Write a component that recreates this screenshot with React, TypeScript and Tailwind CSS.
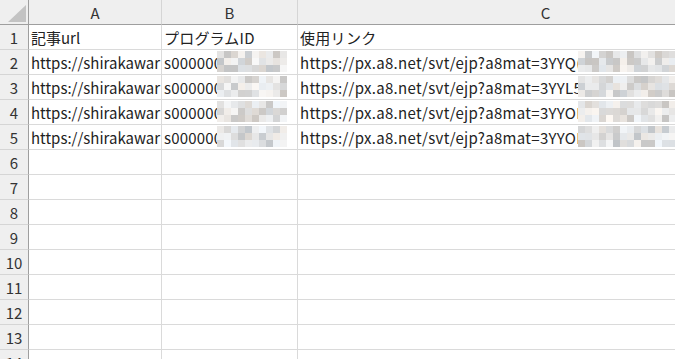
import React from "react";

const rows = 14;

function hash(n: number) {
  const x = Math.sin(n * 12.9898 + 78.233) * 43758.5453;
  return x - Math.floor(x);
}

function Mosaic({ cols, seed, rowsN = 3 }: { cols: number; seed: number; rowsN?: number }) {
  const cells = [];
  for (let r = 0; r < rowsN; r++) {
    for (let c = 0; c < cols; c++) {
      const h = hash(seed * 100 + r * 17 + c);
      const v = Math.round(196 + h * 52);
      const tint = Math.round((hash(seed * 31 + r * 7 + c * 3) - 0.5) * 10);
      cells.push(
        <div
          key={r + "-" + c}
          style={{ backgroundColor: `rgb(${v + tint},${v},${v - tint})` }}
          className="w-[7px] h-[7px]"
        />
      );
    }
  }
  return (
    <div className="grid" style={{ gridTemplateColumns: `repeat(${cols}, 7px)` }}>
      {cells}
    </div>
  );
}

const data: { a: string; b: string; c: string; seed: number }[] = [
  { a: "https://shirakawar", b: "s000000", c: "https://px.a8.net/svt/ejp?a8mat=3YYQ(", seed: 1 },
  { a: "https://shirakawar", b: "s000000", c: "https://px.a8.net/svt/ejp?a8mat=3YYL5", seed: 2 },
  { a: "https://shirakawar", b: "s000000", c: "https://px.a8.net/svt/ejp?a8mat=3YYOI", seed: 3 },
  { a: "https://shirakawar", b: "s000000", c: "https://px.a8.net/svt/ejp?a8mat=3YYOI", seed: 4 },
];

export default function App() {
  const font = { fontFamily: '"Noto Sans CJK JP", "Noto Sans", sans-serif' };
  return (
    <div className="w-[675px] h-[359px] overflow-hidden bg-white text-[15px] text-[#222]" style={font}>
      <div className="grid grid-cols-[29px_133px_136px_496px] grid-rows-[25px_repeat(14,25px)]">
        {/* header row */}
        <div className="relative bg-[#efefef] border-r border-b border-[#9e9e9e]">
          <div className="absolute right-[2px] bottom-[2px] w-0 h-0 border-l-[18px] border-l-transparent border-b-[17px] border-b-[#c3c3c3]" />
        </div>
        {["A", "B", "C"].map((l) => (
          <div
            key={l}
            className="bg-[#efefef] border-r border-r-[#d5d5d5] border-b border-b-[#9e9e9e] flex items-center justify-center text-[#333] leading-none"
          >
            {l}
          </div>
        ))}
        {Array.from({ length: rows }).map((_, i) => {
          const d = i >= 1 && i <= 4 ? data[i - 1] : null;
          return (
            <React.Fragment key={i}>
              <div className="bg-[#efefef] border-r border-r-[#9e9e9e] border-b border-b-[#d5d5d5] flex items-center justify-center text-[#333] leading-none pt-[1px]">
                {i + 1}
              </div>
              <div className="border-r border-b border-[#dadada] flex items-center pl-[2px] overflow-hidden whitespace-nowrap leading-none pt-[1px]">
                {i === 0 ? "記事url" : d ? d.a : ""}
              </div>
              <div className="relative border-r border-b border-[#dadada] flex items-center pl-[2px] overflow-hidden whitespace-nowrap leading-none pt-[1px] tracking-[0.2px]">
                {i === 0 ? "プログラムID" : d ? (
                  <>
                    <span>{d.b}</span>
                    <div className="absolute left-[55px] top-[1px]">
                      <Mosaic cols={10} seed={d.seed} />
                    </div>
                  </>
                ) : ""}
              </div>
              <div className="relative border-b border-[#dadada] flex items-center pl-[2px] overflow-hidden whitespace-nowrap leading-none pt-[1px] tracking-[0.3px]">
                {i === 0 ? "使用リンク" : d ? (
                  <>
                    <span>{d.c}</span>
                    <div className="absolute left-[280px] top-[1px]">
                      <Mosaic cols={16} seed={d.seed + 10} />
                    </div>
                  </>
                ) : ""}
              </div>
            </React.Fragment>
          );
        })}
      </div>
    </div>
  );
}
